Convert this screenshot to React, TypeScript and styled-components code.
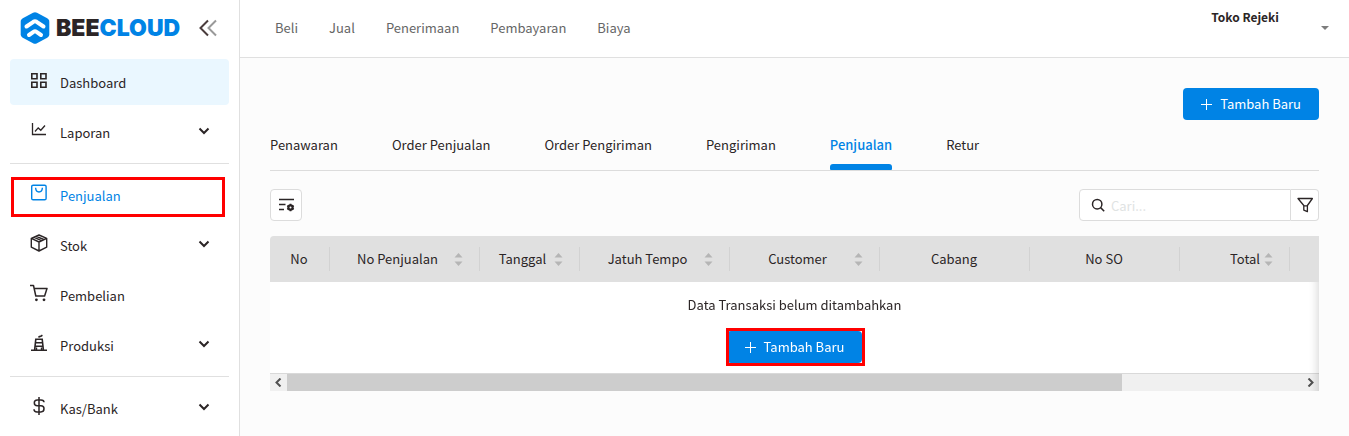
import React, { useRef } from "react";
import styled, { createGlobalStyle, css } from "styled-components";

const blue = "#0083e5";
const ink = "#2b2526";
const line = "#e0e0e0";

const GlobalStyle = createGlobalStyle`
  *, *::before, *::after { box-sizing: border-box; }
  body {
    margin: 0;
    background: #fcfcfc;
    color: ${ink};
    font-family: "Noto Sans CJK SC", "Noto Sans", sans-serif;
    font-size: 13px;
    line-height: 22px;
  }
  button, input { font: inherit; color: inherit; }
  button { cursor: pointer; }
  a { color: inherit; text-decoration: none; }
`;

const Shell = styled.div`
  display: flex;
  min-height: 100vh;
`;

/* ---------- Sidebar ---------- */

const Sidebar = styled.aside`
  flex: 0 0 240px;
  padding: 0 10px;
  background: #fff;
  border-right: 1px solid ${line};
`;

const Brand = styled.div`
  display: flex;
  align-items: center;
  height: 59px;
  padding: 0 11px 3px 10px;
`;

const BrandName = styled.span`
  flex: 1;
  margin-left: 6px;
  font-family: Inter, "Liberation Sans", sans-serif;
  font-size: 23px;
  font-weight: 900;
  line-height: 28px;
`;

const BrandAccent = styled.span`
  color: ${blue};
`;

const CollapseButton = styled.button`
  display: flex;
  padding: 0;
  border: 0;
  background: none;
`;

const MenuGroup = styled.ul`
  display: flex;
  flex-direction: column;
  gap: 4px;
  margin: 0;
  padding: 0;
  list-style: none;

  & + & {
    margin-top: 8px;
    padding-top: 8px;
    border-top: 1px solid ${line};
  }
`;

const MenuItem = styled.li`
  position: relative;
`;

const MenuLink = styled.a<{ $tone?: "filled" | "active" }>`
  display: flex;
  align-items: center;
  height: 46px;
  padding: 0 18px 0 20px;
  border-radius: 4px;
  ${({ $tone }) => $tone === "filled" && css`background: #eaf7ff;`}
  ${({ $tone }) => $tone === "active" && css`color: ${blue};`}
`;

const MenuIcon = styled.span`
  display: flex;
  width: 18px;
  margin-right: 12px;
  padding-bottom: 4px;
`;

const MenuLabel = styled.span`
  flex: 1;
  padding-top: 2px;
`;

const Highlight = styled.span<{ $area: "menu" | "button" }>`
  position: absolute;
  inset: ${({ $area }) => ($area === "menu" ? "5px 4px 1px 1px" : "-3px -3px -3px -1px")};
  border: 3px solid #ff0000;
  pointer-events: none;
`;

/* ---------- Top bar ---------- */

const Main = styled.div`
  flex: 1;
  min-width: 0;
`;

const TopBar = styled.header`
  display: flex;
  justify-content: space-between;
  height: 58px;
  padding: 0 20px 0 35px;
  background: #fff;
  border-bottom: 1px solid ${line};
`;

const QuickNav = styled.nav`
  display: flex;
  align-items: center;
  gap: 31px;
  padding-bottom: 2px;
  color: #666;
`;

const Account = styled.button`
  display: flex;
  align-items: center;
  gap: 42px;
  padding: 0 0 1px;
  border: 0;
  background: none;
`;

const AccountName = styled.span`
  align-self: flex-start;
  padding-top: 6px;
  font-size: 12px;
  font-weight: 700;
`;

/* ---------- Content ---------- */

const Content = styled.main`
  padding: 30px;
`;

const Actions = styled.div`
  display: flex;
  justify-content: flex-end;
`;

const PrimaryButton = styled.button`
  display: flex;
  align-items: center;
  gap: 8px;
  height: 32px;
  padding: 0 18px;
  border: 0;
  border-radius: 4px;
  background: ${blue};
  color: #fff;
`;

const Tabs = styled.nav`
  display: flex;
  gap: 54px;
  height: 51px;
  border-bottom: 1px solid #dcdcdc;
`;

const Tab = styled.a<{ $active?: boolean }>`
  display: flex;
  flex-direction: column;
  justify-content: space-between;
  padding-top: 14px;
  ${({ $active }) =>
    $active &&
    css`
      color: ${blue};
      font-weight: 500;
      &::after {
        content: "";
        height: 6px;
        border-radius: 3px 3px 1px 1px;
        background: ${blue};
      }
    `}
`;

const Toolbar = styled.div`
  display: flex;
  justify-content: space-between;
  margin: 18px 0 15px;
`;

const ToolButton = styled.button`
  display: grid;
  place-items: center;
  width: 32px;
  height: 32px;
  padding: 0;
  border: 1px solid #dcdcdc;
  border-radius: 4px;
  background: #fff;
`;

const SearchGroup = styled.div`
  display: flex;
`;

const SearchBox = styled.label`
  display: flex;
  align-items: center;
  gap: 6px;
  width: 212px;
  height: 32px;
  padding: 0 11px;
  border: 1px solid #dcdcdc;
  border-radius: 4px 0 0 4px;
  background: #fff;
`;

const SearchInput = styled.input`
  flex: 1;
  min-width: 0;
  padding: 2px 0 0;
  border: 0;
  outline: 0;
  background: none;
  &::placeholder { color: #dfe3e3; opacity: 1; }
`;

const FilterButton = styled(ToolButton)`
  width: 28px;
  border-left: 0;
  border-radius: 0 4px 4px 0;
`;

/* ---------- Table ---------- */

const TableFrame = styled.section`
  position: relative;
  container-type: inline-size;
`;

const TableScroller = styled.div`
  overflow-x: auto;
  scrollbar-width: none;
  border-radius: 4px 0 0 0;
  border-bottom: 1px solid #d9d9d9;
  background: #fff;
`;

const Table = styled.table`
  width: 1275px;
  table-layout: fixed;
  border-collapse: collapse;
`;

const HeadCell = styled.th<{ $width: number }>`
  width: ${({ $width }) => $width}px;
  height: 46px;
  padding: 0;
  background: #e0e0e0;
  font-weight: 400;
`;

const HeadInner = styled.div<{ $align?: "right" }>`
  display: flex;
  align-items: center;
  gap: 4px;
  height: 24px;
  padding: 0 16px 0 15px;
  border-right: 1px solid #d2d2d2;
  text-align: ${({ $align }) => $align ?? "center"};
`;

const HeadLabel = styled.span`
  flex: 1;
  white-space: nowrap;
`;

const EmptyCell = styled.td`
  padding: 0;
`;

const EmptyState = styled.div`
  position: sticky;
  left: 0;
  display: flex;
  flex-direction: column;
  align-items: center;
  gap: 15px;
  width: 100cqw;
  padding: 12px 0 10px;
`;

const ButtonSpot = styled.div`
  position: relative;
`;

const EdgeShadow = styled.div`
  position: absolute;
  inset: 46px 0 0 auto;
  width: 10px;
  box-shadow: inset -10px 0 8px -8px rgba(0, 0, 0, 0.15);
  pointer-events: none;
`;

const ScrollBar = styled.div`
  display: flex;
  height: 17px;
  background: #f0f0f0;
`;

const ScrollArrow = styled.button`
  display: grid;
  place-items: center;
  width: 17px;
  padding: 0;
  border: 0;
  background: none;
`;

const ScrollTrack = styled.div`
  flex: 1;
`;

const ScrollThumb = styled.div`
  width: 82.3%;
  height: 100%;
  background: #cdcdcd;
`;

/* ---------- Icons ---------- */

const Svg = ({ size = 18, w = 1.4, children }: { size?: number; w?: number; children: React.ReactNode }) => (
  <svg width={size} height={size} viewBox={`0 0 ${size} ${size}`} fill="none" stroke="currentColor" strokeWidth={w} aria-hidden="true">
    {children}
  </svg>
);

const GridIcon = () => (
  <Svg w={1.6}>
    <path d="M1.800 2.800h5.200v5H1.800zM10.800 2.800h5.200v5h-5.200zM1.800 11.200h5.200v5H1.800zM10.800 11.200h5.200v5h-5.200z" />
  </Svg>
);
const ChartIcon = () => (
  <Svg w={1.3}>
    <path d="M2.5 2v11.500H16" />
    <path d="M5 10.500l3.200-3.600 2.600 2.400L15 4.500" />
  </Svg>
);
const BagIcon = () => (
  <Svg w={1.4}>
    <rect x="1.700" y="1.200" width="14.400" height="14.600" rx="1.400" />
    <path d="M5.600 3.800c.2 2.800 1.500 4.200 3.400 4.200s3.200-1.400 3.400-4.200" />
  </Svg>
);
const BoxIcon = () => (
  <Svg w={1.4}>
    <path strokeLinejoin="round" d="M9 1l7.700 3.400v8.800L9 17l-7.700-3.800V4.400zM1.300 4.400L9 8l7.700-3.600M9 8v9M6.400 2.300l7.300 3.200M4.200 3.300l7.200 3.300" />
  </Svg>
);
const CartIcon = () => (
  <Svg w={1.5}>
    <path strokeLinejoin="round" d="M0 1.500h3.500L5.800 12h8.800L17 4.500H4.200" />
    <circle cx="6.400" cy="15.800" r="1.400" fill="currentColor" stroke="none" />
    <circle cx="14" cy="15.800" r="1.400" fill="currentColor" stroke="none" />
  </Svg>
);
const FactoryIcon = () => (
  <Svg w={1.6}>
    <path d="M1 16.200h16M4.600 16L5.800 5.200h6.400l1.200 10.800M5.400 8.700h7.200M5 12.300h8" />
    <path d="M6.400 13.500v2.500M11.600 13.500v2.500" />
    <path d="M8.600 3.400c.5-1.500 1.800-.8 2.600-1.300.5-.3.700-.7 1.200-1" />
  </Svg>
);
const DollarIcon = () => (
  <Svg w={1.5}>
    <path d="M9 0v18M14 5.3c0-1.5-1.2-2.4-3-2.4H7.3c-1.8 0-3 1.1-3 2.9 0 1.9 1.2 3 3 3h3.6c1.9 0 3.1 1.1 3.1 3s-1.2 3.1-3.1 3.1H7c-1.8 0-3-1-3-2.6" />
  </Svg>
);
const ChevronIcon = () => (
  <Svg size={14} w={2}>
    <path d="M2.5 3.5L7 8l4.5-4.5" />
  </Svg>
);
const PlusIcon = () => (
  <Svg size={11} w={1}>
    <path d="M5.5 0v11M0 5.5h11" />
  </Svg>
);
const SearchIcon = () => (
  <Svg size={14} w={1.5}>
    <circle cx="6.2" cy="6.2" r="4.7" />
    <path d="M9.6 9.6l3.6 3.6" />
  </Svg>
);
const FunnelIcon = () => (
  <Svg size={16} w={1.3}>
    <path strokeLinejoin="round" d="M1 1.500h14.400L10.400 8.500v6.200l-3.600-1.500V8.500zM6.800 8.800h3.600" />
  </Svg>
);
const ColumnsIcon = () => (
  <Svg size={18} w={1.6}>
    <path d="M2 3.500h15M2 8.500h6.500M2 13.500h5" />
    <circle cx="13.500" cy="11.500" r="2.100" strokeWidth="2.200" />
    <path strokeWidth="1.800" d="M13.500 7.800v1.600M13.500 13.600v1.600M10.300 9.700l1.400.8M15.300 12.500l1.400.8M10.300 13.300l1.400-.8M15.300 10.500l1.400-.8" />
  </Svg>
);
const CaretIcon = () => (
  <svg width="8" height="4" viewBox="0 0 8 4" aria-hidden="true">
    <path d="M0 0h8L4 4z" fill="#7d7d7d" />
  </svg>
);
const SortIcon = () => (
  <svg width="9" height="13" viewBox="0 0 9 13" aria-hidden="true">
    <path d="M4.5 0L8.5 4.5h-8zM4.5 13L.5 8.5h8z" fill="#b5b5b5" />
  </svg>
);
const CollapseIcon = () => (
  <svg width="20" height="18" viewBox="0 0 20 18" fill="none" strokeWidth="2" aria-hidden="true">
    <path d="M18 1.5L10.5 9l7.500 7.500" stroke="#999" />
    <path d="M10 1.500L2.500 9l7.500 7.500" stroke="#4a3c3c" />
  </svg>
);
const LogoMark = () => (
  <svg width="30" height="32" viewBox="0 0 30 32" aria-hidden="true">
    <path d="M13 .8c1.300-.7 2.700-.7 4 0l10.200 5.500c1.400.8 2.100 1.900 2.100 3.400v12.600c0 1.500-.7 2.600-2.100 3.400L17 31.200c-1.300.7-2.700.7-4 0L2.800 25.700C1.400 24.900.7 23.800.7 22.300V9.700c0-1.500.7-2.600 2.100-3.400z" fill={blue} />
    <path d="M6.500 14.500L13.400 9.800q1.600-1 3.200 0l6.900 4.700M9 23l4.500-3.200q1.500-1 3 0l4.500 3.200" fill="none" stroke="#fff" strokeWidth="4" strokeLinecap="round" strokeLinejoin="round" />
  </svg>
);

/* ---------- Data ---------- */

type Entry = {
  label: string;
  icon: React.ReactNode;
  expandable?: boolean;
  tone?: "filled" | "active";
};

const menu: Entry[][] = [
  [
    { label: "Dashboard", icon: <GridIcon />, tone: "filled" },
    { label: "Laporan", icon: <ChartIcon />, expandable: true },
  ],
  [
    { label: "Penjualan", icon: <BagIcon />, tone: "active" },
    { label: "Stok", icon: <BoxIcon />, expandable: true },
    { label: "Pembelian", icon: <CartIcon /> },
    { label: "Produksi", icon: <FactoryIcon />, expandable: true },
  ],
  [{ label: "Kas/Bank", icon: <DollarIcon />, expandable: true }],
];

const quickLinks = ["Beli", "Jual", "Penerimaan", "Pembayaran", "Biaya"];
const tabs = ["Penawaran", "Order Penjualan", "Order Pengiriman", "Pengiriman", "Penjualan", "Retur"];

const columns: { label: string; width: number; sortable?: boolean; align?: "right" }[] = [
  { label: "No", width: 60 },
  { label: "No Penjualan", width: 150, sortable: true },
  { label: "Tanggal", width: 100, sortable: true },
  { label: "Jatuh Tempo", width: 150, sortable: true },
  { label: "Customer", width: 150, sortable: true },
  { label: "Cabang", width: 150 },
  { label: "No SO", width: 150 },
  { label: "Total", width: 110, sortable: true, align: "right" },
  { label: "", width: 255 },
];

const AddButton = () => (
  <PrimaryButton type="button">
    <PlusIcon />
    Tambah Baru
  </PrimaryButton>
);

export default function App() {
  const scroller = useRef<HTMLDivElement>(null);
  const scroll = (left: number) => scroller.current?.scrollBy({ left });

  return (
    <>
      <GlobalStyle />
      <Shell>
        <Sidebar>
          <Brand>
            <LogoMark />
            <BrandName>
              BEE<BrandAccent>CLOUD</BrandAccent>
            </BrandName>
            <CollapseButton type="button" aria-label="Collapse menu">
              <CollapseIcon />
            </CollapseButton>
          </Brand>
          {menu.map((group) => (
            <MenuGroup key={group[0].label}>
              {group.map((item) => (
                <MenuItem key={item.label}>
                  <MenuLink href="#" $tone={item.tone}>
                    <MenuIcon>{item.icon}</MenuIcon>
                    <MenuLabel>{item.label}</MenuLabel>
                    {item.expandable && <ChevronIcon />}
                  </MenuLink>
                  {item.tone === "active" && <Highlight $area="menu" />}
                </MenuItem>
              ))}
            </MenuGroup>
          ))}
        </Sidebar>

        <Main>
          <TopBar>
            <QuickNav>
              {quickLinks.map((label) => (
                <a href="#" key={label}>{label}</a>
              ))}
            </QuickNav>
            <Account type="button">
              <AccountName>Toko Rejeki</AccountName>
              <CaretIcon />
            </Account>
          </TopBar>

          <Content>
            <Actions>
              <AddButton />
            </Actions>
            <Tabs>
              {tabs.map((label) => (
                <Tab href="#" key={label} $active={label === "Penjualan"}>{label}</Tab>
              ))}
            </Tabs>
            <Toolbar>
              <ToolButton type="button" aria-label="Column settings">
                <ColumnsIcon />
              </ToolButton>
              <SearchGroup>
                <SearchBox>
                  <SearchIcon />
                  <SearchInput type="text" placeholder="Cari..." aria-label="Cari" />
                </SearchBox>
                <FilterButton type="button" aria-label="Filter">
                  <FunnelIcon />
                </FilterButton>
              </SearchGroup>
            </Toolbar>

            <TableFrame>
              <TableScroller ref={scroller}>
                <Table>
                  <thead>
                    <tr>
                      {columns.map((col) => (
                        <HeadCell key={col.label} $width={col.width} scope="col">
                          <HeadInner $align={col.align}>
                            <HeadLabel>{col.label}</HeadLabel>
                            {col.sortable && <SortIcon />}
                          </HeadInner>
                        </HeadCell>
                      ))}
                    </tr>
                  </thead>
                  <tbody>
                    <tr>
                      <EmptyCell colSpan={columns.length}>
                        <EmptyState>
                          Data Transaksi belum ditambahkan
                          <ButtonSpot>
                            <AddButton />
                            <Highlight $area="button" />
                          </ButtonSpot>
                        </EmptyState>
                      </EmptyCell>
                    </tr>
                  </tbody>
                </Table>
              </TableScroller>
              <ScrollBar>
                <ScrollArrow type="button" aria-label="Scroll left" onClick={() => scroll(-100)}>
                  <svg width="7" height="9" viewBox="0 0 7 9" fill="none" stroke="#505050" strokeWidth="2" aria-hidden="true">
                    <path d="M5.500 .5l-4 4 4 4" />
                  </svg>
                </ScrollArrow>
                <ScrollTrack>
                  <ScrollThumb />
                </ScrollTrack>
                <ScrollArrow type="button" aria-label="Scroll right" onClick={() => scroll(100)}>
                  <svg width="7" height="9" viewBox="0 0 7 9" fill="none" stroke="#505050" strokeWidth="2" aria-hidden="true">
                    <path d="M1.500 .5l4 4-4 4" />
                  </svg>
                </ScrollArrow>
              </ScrollBar>
              <EdgeShadow />
            </TableFrame>
          </Content>
        </Main>
      </Shell>
    </>
  );
}
